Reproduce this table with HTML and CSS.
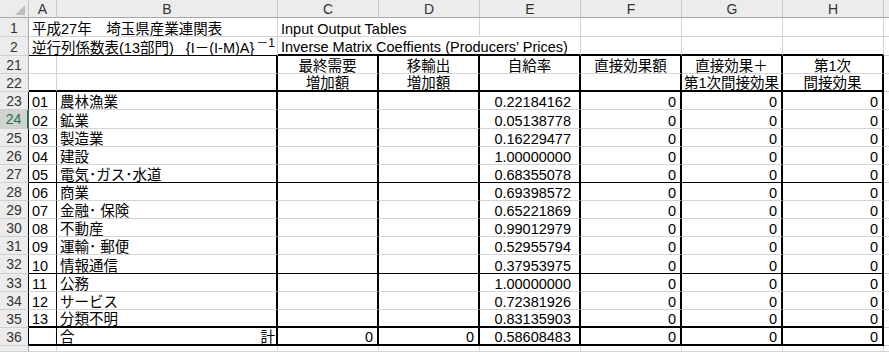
FILE: index.html
```html
<!DOCTYPE html>
<html lang="ja">
<head>
<meta charset="utf-8">
<title>平成27年 埼玉県産業連関表</title>
<link rel="stylesheet" href="styles.css">
</head>
<body>
<div class="sheet">
  <!-- column headers -->
  <div class="c ch corner"><svg class="tri" width="29" height="18" viewBox="0 0 29 18"><polygon points="25,5 25,15 15,15" fill="#bdbdbd"/></svg></div>
  <div class="c ch">A</div><div class="c ch">B</div><div class="c ch">C</div><div class="c ch">D</div><div class="c ch">E</div><div class="c ch">F</div><div class="c ch">G</div><div class="c ch">H</div><div class="c ch"></div>

  <!-- row 1 -->
  <div class="c rh">1</div>
  <div class="c s2">平成27年　埼玉県産業連関表</div>
  <div class="c s2">Input Output Tables</div>
  <div class="c"></div><div class="c"></div><div class="c"></div><div class="c"></div><div class="c"></div>

  <!-- row 2 -->
  <div class="c rh">2</div>
  <div class="c s2 ht"><span>逆行列係数表(13部門)&nbsp;&nbsp;&nbsp;{I－(I-M)A}<sup class="sup">－1</sup></span></div>
  <div class="c s3 hb">Inverse Matrix Coeffients (Producers’ Prices)</div>
  <div class="c hb"></div><div class="c hb"></div><div class="c hb"></div><div class="c"></div>

  <!-- row 21 -->
  <div class="c rh">21</div>
  <div class="c"></div><div class="c vb"></div>
  <div class="c vb C">最終需要</div><div class="c vb C">移輸出</div><div class="c vb C">自給率</div><div class="c vb C">直接効果額</div><div class="c vb C">直接効果＋</div><div class="c vb C">第1次</div><div class="c"></div>

  <!-- row 22 -->
  <div class="c rh">22</div>
  <div class="c hb"></div><div class="c vb hb"></div>
  <div class="c vb hb C">増加額</div><div class="c vb hb C">増加額</div><div class="c vb hb C"></div><div class="c vb hb C"></div><div class="c vb hb C">第1次間接効果</div><div class="c vb hb C">間接効果</div><div class="c"></div>

  <!-- rows 23-35 -->
  <div class="c rh blk">23</div><div class="c vt">01</div><div class="c vb">農林漁業</div><div class="c vb"></div><div class="c vb"></div><div class="c vb R e">0.22184162</div><div class="c vb R n">0</div><div class="c vb R n">0</div><div class="c vb R n">0</div><div class="c"></div>
  <div class="c rh blk act">24</div><div class="c vt">02</div><div class="c vb">鉱業</div><div class="c vb"></div><div class="c vb"></div><div class="c vb R e">0.05138778</div><div class="c vb R n">0</div><div class="c vb R n">0</div><div class="c vb R n">0</div><div class="c"></div>
  <div class="c rh blk">25</div><div class="c vt">03</div><div class="c vb">製造業</div><div class="c vb"></div><div class="c vb"></div><div class="c vb R e">0.16229477</div><div class="c vb R n">0</div><div class="c vb R n">0</div><div class="c vb R n">0</div><div class="c"></div>
  <div class="c rh blk">26</div><div class="c vt">04</div><div class="c vb">建設</div><div class="c vb"></div><div class="c vb"></div><div class="c vb R e">1.00000000</div><div class="c vb R n">0</div><div class="c vb R n">0</div><div class="c vb R n">0</div><div class="c"></div>
  <div class="c rh blk">27</div><div class="c vt ht">05</div><div class="c vb ht">電気･ガス･水道</div><div class="c vb ht"></div><div class="c vb ht"></div><div class="c vb ht R e">0.68355078</div><div class="c vb ht R n">0</div><div class="c vb ht R n">0</div><div class="c vb ht R n">0</div><div class="c"></div>
  <div class="c rh blk">28</div><div class="c vt">06</div><div class="c vb">商業</div><div class="c vb"></div><div class="c vb"></div><div class="c vb R e">0.69398572</div><div class="c vb R n">0</div><div class="c vb R n">0</div><div class="c vb R n">0</div><div class="c"></div>
  <div class="c rh blk">29</div><div class="c vt">07</div><div class="c vb">金融･ 保険</div><div class="c vb"></div><div class="c vb"></div><div class="c vb R e">0.65221869</div><div class="c vb R n">0</div><div class="c vb R n">0</div><div class="c vb R n">0</div><div class="c"></div>
  <div class="c rh blk">30</div><div class="c vt">08</div><div class="c vb">不動産</div><div class="c vb"></div><div class="c vb"></div><div class="c vb R e">0.99012979</div><div class="c vb R n">0</div><div class="c vb R n">0</div><div class="c vb R n">0</div><div class="c"></div>
  <div class="c rh blk">31</div><div class="c vt">09</div><div class="c vb">運輸･ 郵便</div><div class="c vb"></div><div class="c vb"></div><div class="c vb R e">0.52955794</div><div class="c vb R n">0</div><div class="c vb R n">0</div><div class="c vb R n">0</div><div class="c"></div>
  <div class="c rh blk">32</div><div class="c vt ht">10</div><div class="c vb ht">情報通信</div><div class="c vb ht"></div><div class="c vb ht"></div><div class="c vb ht R e">0.37953975</div><div class="c vb ht R n">0</div><div class="c vb ht R n">0</div><div class="c vb ht R n">0</div><div class="c"></div>
  <div class="c rh blk">33</div><div class="c vt">11</div><div class="c vb">公務</div><div class="c vb"></div><div class="c vb"></div><div class="c vb R e">1.00000000</div><div class="c vb R n">0</div><div class="c vb R n">0</div><div class="c vb R n">0</div><div class="c"></div>
  <div class="c rh blk">34</div><div class="c vt">12</div><div class="c vb">サービス</div><div class="c vb"></div><div class="c vb"></div><div class="c vb R e">0.72381926</div><div class="c vb R n">0</div><div class="c vb R n">0</div><div class="c vb R n">0</div><div class="c"></div>
  <div class="c rh blk">35</div><div class="c vt hb">13</div><div class="c vb hb">分類不明</div><div class="c vb hb"></div><div class="c vb hb"></div><div class="c vb hb R e">0.83135903</div><div class="c vb hb R n">0</div><div class="c vb hb R n">0</div><div class="c vb hb R n">0</div><div class="c"></div>

  <!-- row 36 -->
  <div class="c rh blk">36</div><div class="c vt hb"></div><div class="c vb hb dist"><span>合</span><span>計</span></div><div class="c vb hb R n">0</div><div class="c vb hb R n">0</div><div class="c vb hb R e">0.58608483</div><div class="c vb hb R n">0</div><div class="c vb hb R n">0</div><div class="c vb hb R n">0</div><div class="c"></div>

  <!-- row 37 (partial) -->
  <div class="c rh"></div><div class="c"></div><div class="c"></div><div class="c"></div><div class="c"></div><div class="c"></div><div class="c"></div><div class="c"></div><div class="c"></div><div class="c"></div>
</div>
</body>
</html>
```

FILE: styles.css
```css
* {
  box-sizing: border-box;
  margin: 0;
  padding: 0;
}

html, body {
  width: 889px;
  height: 352px;
  overflow: hidden;
  background: #ffffff;
}

body {
  font-family: "Liberation Sans", "Noto Sans CJK JP", sans-serif;
  font-size: 14.5px;
  color: #000000;
}

.sheet {
  display: grid;
  grid-template-columns: 29px 28px 221px repeat(6, 101px) 1fr;
  grid-template-rows: 18px 19px 19px repeat(16, 18.125px) 1fr;
  width: 889px;
  height: 352px;
}

.c {
  display: flex;
  align-items: flex-end;
  min-width: 0;
  padding: 0 3px;
  white-space: nowrap;
  line-height: 13px;
  border-right: 1px solid #d4d4d4;
  border-bottom: 1px solid #d4d4d4;
}

.s2 { grid-column: span 2; }
.s3 { grid-column: span 3; }

/* headers */
.ch {
  justify-content: center;
  align-items: center;
  background: #ececec;
  color: #333333;
  font-size: 14px;
  line-height: 16px;
  border-right-color: #c6c6c6;
  border-bottom-color: #a8a8a8;
}

.corner {
  position: relative;
  padding: 0;
}

.tri {
  position: absolute;
  left: 0;
  top: 0;
}

.rh {
  justify-content: center;
  align-items: center;
  padding: 1px 0 0;
  background: #ececec;
  color: #333333;
  font-size: 14px;
  line-height: 16px;
  border-right-color: #a8a8a8;
  border-bottom-color: #cfcfcf;
}

.rh.blk { border-right-color: #000000; }

.rh.act {
  background: #d2d2d2;
  color: #217346;
  border-right: 2px solid #217346;
}

/* alignment */
.R { justify-content: flex-end; }
.C { justify-content: center; }
.n { padding-right: 4px; }
.e { padding-right: 8px; }

.dist {
  justify-content: space-between;
  padding-right: 1px;
}

/* borders */
.vb { border-right: 2px solid #000000; }
.vt { border-right: 1px solid #000000; }
.hb { border-bottom: 2px solid #000000; }
.ht { border-bottom: 1px solid #000000; }

.sup {
  font-size: 12px;
  line-height: 0;
  vertical-align: 6px;
  margin-left: 2px;
}
```
